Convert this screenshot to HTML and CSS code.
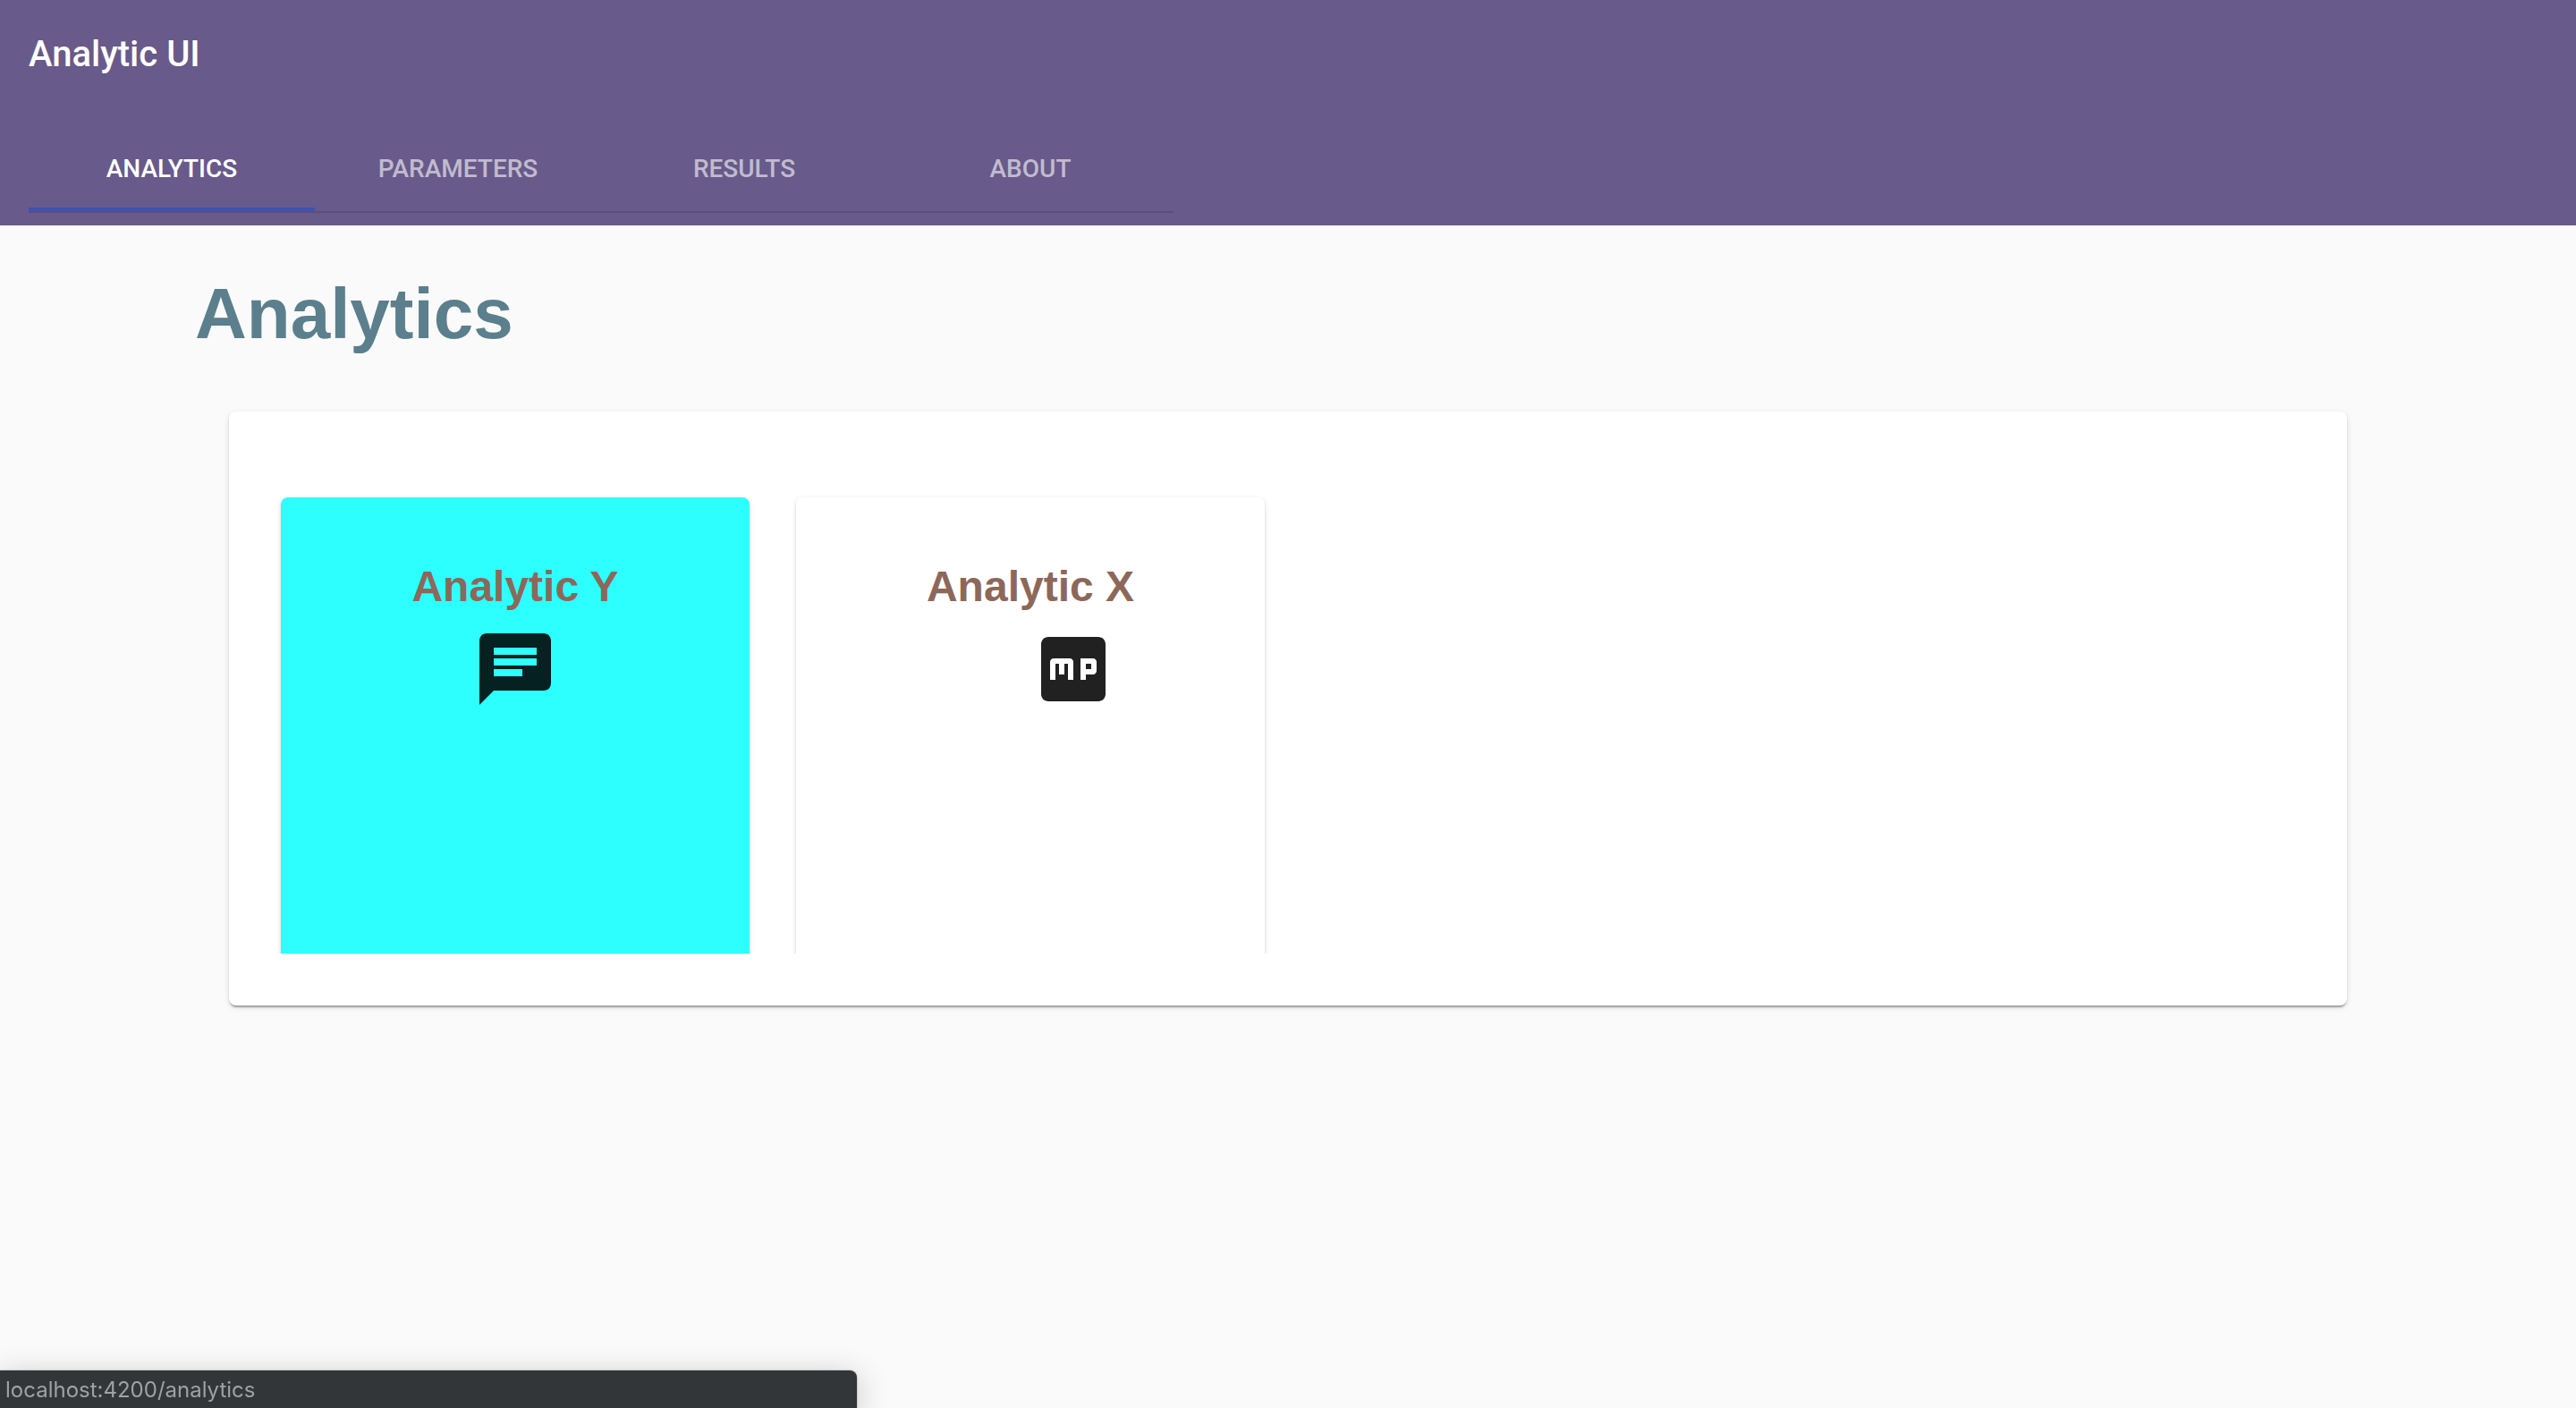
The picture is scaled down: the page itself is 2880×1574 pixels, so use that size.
FILE: index.html
```html
<!DOCTYPE html>
<html lang="en">
<head>
<meta charset="utf-8">
<meta name="viewport" content="width=device-width, initial-scale=1">
<title>Analytic UI</title>
<link rel="stylesheet" href="styles.css">
</head>
<body>
<header class="toolbar">
  <div class="brand">Analytic UI</div>
  <nav class="tabs">
    <a class="tab tab-active" href="#analytics" aria-current="page">ANALYTICS</a>
    <a class="tab" href="#parameters">PARAMETERS</a>
    <a class="tab" href="#results">RESULTS</a>
    <a class="tab" href="#about">ABOUT</a>
  </nav>
</header>
<main class="page">
  <h1 class="page-title">Analytics</h1>
  <section class="panel">
    <div class="tiles">
      <article class="tile tile-selected">
        <h2 class="tile-title">Analytic Y</h2>
        <svg class="icon" viewBox="0 0 24 24" aria-hidden="true"><path d="M20 2H4c-1.100 0-1.990.9-1.990 2L2 22l4-4h14c1.100 0 2-.9 2-2V4c0-1.100-.9-2-2-2zM6 9h12v2H6V9zm8 5H6v-2h8v2zm4-6H6V6h12v2z"/></svg>
      </article>
      <article class="tile">
        <h2 class="tile-title">Analytic X</h2>
        <svg class="icon icon-shifted" viewBox="0 0 24 24" aria-hidden="true"><path fill-rule="evenodd" d="M5 3h14c1.100 0 2 .9 2 2v14c0 1.100-.9 2-2 2H5c-1.100 0-2-.9-2-2V5c0-1.100.9-2 2-2zM6.500 9c-.550 0-1 .450-1 1v5H7v-4.500h1v3h1.500v-3h1V15H12v-5c0-.550-.450-1-1-1H6.500zM14 9v6h1.500v-1.500h2c.550 0 1-.450 1-1V10c0-.550-.450-1-1-1H14zm1.500 1.500H17V12h-1.500v-1.500z"/></svg>
      </article>
    </div>
  </section>
</main>
<div class="status-bar">localhost:4200/analytics</div>
</body>
</html>
```

FILE: styles.css
```css
* {
  box-sizing: border-box;
}

body {
  margin: 0;
  min-height: 100vh;
  background: #fafafa;
  color: rgba(0, 0, 0, 0.87);
  font-family: Roboto, "Liberation Sans", sans-serif;
}

.toolbar {
  padding: 0 32px 14px;
  background: #685a8a;
  color: #fff;
}

.brand {
  margin-bottom: 18px;
  font-size: 40px;
  font-weight: 500;
  line-height: 122px;
  white-space: nowrap;
}

.tabs {
  display: flex;
  width: fit-content;
  border-bottom: 2px solid rgba(0, 0, 0, 0.12);
}

.tab {
  display: flex;
  align-items: center;
  justify-content: center;
  width: 320px;
  height: 96px;
  color: rgba(255, 255, 255, 0.6);
  font-size: 28px;
  font-weight: 500;
  text-decoration: none;
}

.tab-active {
  color: #fff;
  box-shadow: inset 0 -4px #3f51b5;
}

.page {
  padding: 50px 218px;
}

.page-title {
  margin: 0 0 60px;
  color: #5b7f8d;
  font: bold 80px/98px "Liberation Sans", Arial, sans-serif;
}

.panel {
  margin: 0 38px;
  padding: 32px 32px 58px;
  border-radius: 8px;
  background: #fff;
  box-shadow: 0 4px 2px -2px rgba(0, 0, 0, 0.2), 0 2px 2px rgba(0, 0, 0, 0.14), 0 2px 6px rgba(0, 0, 0, 0.12);
}

.tiles {
  display: grid;
  grid-template-columns: repeat(4, 1fr);
  align-items: start;
  gap: 52px;
  height: 574px;
  padding: 64px 26px 0;
  overflow: hidden;
}

.tile {
  display: flex;
  flex-direction: column;
  align-items: center;
  gap: 16px;
  aspect-ratio: 1;
  padding-top: 72px;
  border-radius: 8px;
  background: #fff;
  box-shadow: 0 4px 2px -2px rgba(0, 0, 0, 0.2), 0 2px 2px rgba(0, 0, 0, 0.14), 0 2px 6px rgba(0, 0, 0, 0.12);
}

.tile-selected {
  background: #2dffff;
}

.tile-title {
  margin: 0;
  color: #8d685a;
  font: bold 48px/56px "Liberation Sans", Arial, sans-serif;
}

.icon {
  width: 96px;
  height: 96px;
  fill: currentColor;
}

.icon-shifted {
  margin-left: 96px;
}

.status-bar {
  position: fixed;
  bottom: 0;
  left: 0;
  width: 958px;
  max-width: 100%;
  padding: 2px 6px 0;
  border-radius: 0 8px 0 0;
  background: #333639;
  box-shadow: 0 0 2px rgba(0, 0, 0, 0.4), 0 8px 36px rgba(0, 0, 0, 0.24);
  color: #9fa1a3;
  font-family: Inter, sans-serif;
  font-size: 24px;
  line-height: 40px;
}
```
